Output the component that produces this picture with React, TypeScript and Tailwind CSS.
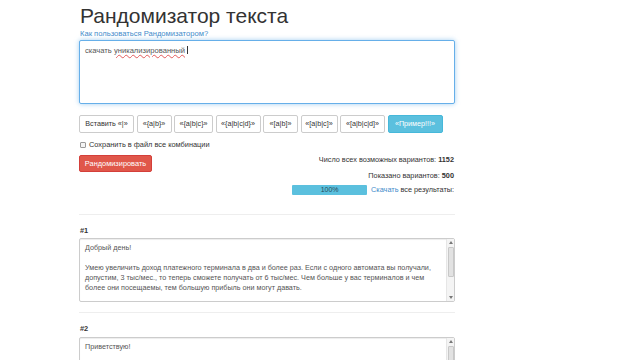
import { useState } from "react";

const options = [
  { label: "Вставить «|»", w: "w-[55px]" },
  { label: "«{a|b}»", w: "w-[35px]" },
  { label: "«{a|b|c}»", w: "w-[39px]" },
  { label: "«{a|b|c|d}»", w: "w-[45px]" },
  { label: "«[a|b]»", w: "w-[35px]" },
  { label: "«[a|b|c]»", w: "w-[37px]" },
  { label: "«[a|b|c|d]»", w: "w-[45px]" },
];

function FakeScrollbar() {
  return (
    <div className="flex w-[8px] shrink-0 flex-col items-center border-l border-[#e6e6e6] bg-[#f4f4f4] py-[2px]">
      <div className="h-0 w-0 border-x-[2px] border-b-[3px] border-x-transparent border-b-[#777]" />
      <div className="mt-[3px] h-[30px] w-[6px] rounded-[1px] border border-[#c8c8c8] bg-[#e2e2e2]" />
      <div className="flex-1" />
      <div className="h-0 w-0 border-x-[2px] border-t-[3px] border-x-transparent border-t-[#777]" />
    </div>
  );
}

function ResultBox({ children }: { children: React.ReactNode }) {
  return (
    <div className="flex h-[64px] rounded-[2px] border border-[#ccc] bg-white shadow-[inset_0_1px_1px_rgba(0,0,0,0.075)]">
      <div className="flex-1 overflow-hidden px-[5px] pt-[4px] text-[7.2px] leading-[10px] whitespace-nowrap text-[#555]">
        {children}
      </div>
      <FakeScrollbar />
    </div>
  );
}

export default function App() {
  const [saveAll, setSaveAll] = useState(false);

  return (
    <div className="h-[360px] w-[640px] overflow-hidden bg-white font-['Liberation_Sans',Arial,sans-serif] text-[#333]">
      <div className="ml-[79px] w-[376px]">
        <h1 className="mt-[4px] pl-[1px] text-[21px] leading-[24px] font-normal">Рандомизатор текста</h1>
        <a className="mt-[1px] block pl-[1px] text-[7.6px] leading-[10px] text-[#428bca]">
          Как пользоваться Рандомизатором?
        </a>

        <div className="mt-[1px] h-[64px] rounded-[2px] border border-[#66afe9] bg-white px-[5px] py-[4px] text-[7.6px] leading-[10px] text-[#555] shadow-[0_0_5px_rgba(102,175,233,0.6)]">
          скачать{" "}
          <span className="underline decoration-[#e35a5a] decoration-wavy decoration-[0.5px] underline-offset-[1px]">
            уникализированный
          </span>{" "}
          <span className="inline-block h-[8px] w-[1px] translate-y-[1px] bg-[#333]" />
        </div>

        <div className="mt-[11px] flex gap-[2.5px]">
          {options.map((o) => (
            <button
              key={o.label}
              className={`${o.w} h-[18px] rounded-[2px] border border-[#ccc] bg-white text-[7.2px] whitespace-nowrap text-[#333]`}
            >
              {o.label}
            </button>
          ))}
          <button className="h-[18px] w-[55px] rounded-[2px] border border-[#46b8da] bg-[#5bc0de] text-[7.2px] whitespace-nowrap text-white">
            «Пример!!!»
          </button>
        </div>

        <label className="mt-[7px] flex items-center gap-[3px] pl-[1px] text-[7.4px] leading-[10px]">
          <span
            onClick={() => setSaveAll(!saveAll)}
            className="h-[6px] w-[6px] rounded-[1px] border border-[#9a9a9a] bg-[#f4f4f4]"
          />
          Сохранить в файл все комбинации
        </label>

        <div className="mt-[1px] flex justify-between">
          <button className="mt-[4px] h-[17px] w-[73px] self-start rounded-[2px] border border-[#d43f3a] bg-[#e0574a] text-[7.4px] text-white">
            Рандомизировать
          </button>
          <div className="flex flex-col items-end pr-[1px] text-[7.3px] text-[#333]">
            <div className="mt-[2px] leading-[14px]">
              Число всех возможных вариантов: <b>1152</b>
            </div>
            <div className="mt-[2px] leading-[14px]">
              Показано вариантов: <b>500</b>
            </div>
            <div className="mt-[1px] flex items-center gap-[4px] leading-[12px]">
              <div className="flex h-[10px] w-[75px] items-center justify-center rounded-[1px] bg-[#5bc0de] text-[7px] text-[#2a4a5a]">
                100%
              </div>
              <span>
                <a className="text-[#428bca]">Скачать</a> все результаты:
              </span>
            </div>
          </div>
        </div>

        <hr className="mt-[18px] border-t border-[#eee]" />

        <div className="mt-[11px] pl-[1px] text-[7.4px] leading-[10px] font-bold">#1</div>
        <div className="mt-[2px]">
          <ResultBox>
            Добрый день!
            <br />
            <br />
            Умею увеличить доход платежного терминала в два и более раз. Если с одного автомата вы получали,
            <br />
            допустим, 3 тыс/мес., то теперь сможете получать от 6 тыс/мес. Чем больше у вас терминалов и чем
            <br />
            более они посещаемы, тем большую прибыль они могут давать.
          </ResultBox>
        </div>

        <hr className="mt-[10px] border-t border-[#eee]" />

        <div className="mt-[11px] pl-[1px] text-[7.4px] leading-[10px] font-bold">#2</div>
        <div className="mt-[3px]">
          <ResultBox>Приветствую!</ResultBox>
        </div>
      </div>
    </div>
  );
}
